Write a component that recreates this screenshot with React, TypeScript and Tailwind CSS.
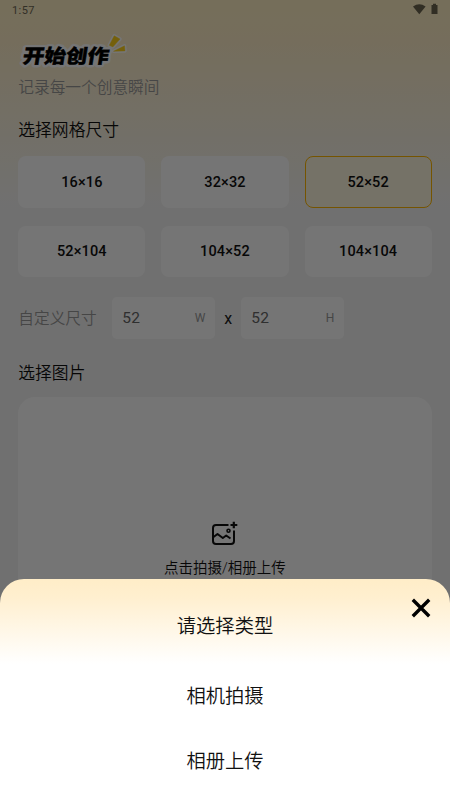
const SIZES = ['16×16', '32×32', '52×52', '52×104', '104×52', '104×104'];

function StatusBar() {
  return (
    <div className="flex h-5 items-center justify-between pl-3 pr-[11px] text-[#6e6854] text-[11px] leading-5 tracking-[0.4px]">
      <span className="relative top-px">1:57</span>
      <svg className="h-5 w-[26px]" viewBox="0 0 26 20" fill="#6b6450">
        <path d="M0 6.5Q6.3 1.8 12.6 6.5L6.3 14.2Z" />
        <path d="M18.5 5h1.5V3.7h3V5h1.5v9h-6z" />
      </svg>
    </div>
  );
}

function Rays() {
  return (
    <>
      <path d="M91.3 11.3L96.2 1.8L102 5L94.9 12.9Z" />
      <path d="M95.5 17.3L106.5 11.8L107 16.9Z" />
    </>
  );
}

function Logo() {
  return (
    <svg className="block h-[36px] w-[112px] overflow-visible" viewBox="0 0 112 36">
      <g stroke="#fff" strokeWidth="3.5" strokeLinejoin="round" fill="#fff">
        <Rays />
      </g>
      <text
        transform="translate(4 29.2) skewX(-9) scale(1 0.9)"
        fontSize="21.4"
        fontWeight="900"
        textLength="86"
        fill="#fff"
        stroke="#fff"
        strokeWidth="6"
        strokeLinejoin="round"
      >
        开始创作
      </text>
      <text
        transform="translate(4 29.2) skewX(-9) scale(1 0.9)"
        fontSize="21.4"
        fontWeight="900"
        textLength="86"
        fill="#000"
        stroke="#000"
        strokeWidth="0.5"
      >
        开始创作
      </text>
      <g fill="#ffd21a" stroke="#ffd21a" strokeWidth="0.4">
        <Rays />
      </g>
    </svg>
  );
}

function SizeField({ unit }: { unit: string }) {
  return (
    <div className="flex h-[42px] w-[103px] items-center justify-between rounded-[5px] bg-white px-[10px]">
      <span className="pt-[2px] text-[15.5px] tracking-[0.2px] text-[#666]">52</span>
      <span className="text-xs text-[#999]">{unit}</span>
    </div>
  );
}

function AddImageIcon() {
  return (
    <svg className="h-7 w-7" viewBox="0 0 28 28" fill="none" stroke="#111" strokeWidth="2">
      <path d="M17.5 5H5A3 3 0 0 0 2 8V21A3 3 0 0 0 5 24H20A3 3 0 0 0 23 21V10.5" />
      <path d="M2.5 17L6.5 14L11.8 18L15.2 15.5L19.5 18.5" strokeLinejoin="round" />
      <circle cx="17.5" cy="10.7" r="1.5" strokeWidth="1.6" />
      <path d="M22.8 1.7V8.3M19.5 5H26.3" strokeWidth="2.2" />
    </svg>
  );
}

export default function App() {
  return (
    <div className="relative h-[800px] w-[450px] overflow-hidden bg-[#f5f5f5] font-[Roboto,'Noto_Sans_CJK_SC',sans-serif]">
      <div className="h-full bg-[linear-gradient(180deg,#fff0c4_0px,#feeec8_40px,#f5f5f5_210px)]">
        <StatusBar />
        <main className="flex flex-col px-[18.3px] pt-[14px]">
          <Logo />
          <p className="mt-[7px] text-[15.7px] font-[350] leading-[22px] text-[#999]">记录每一个创意瞬间</p>
          <h2 className="mt-[18px] text-[16.8px] font-[350] leading-[26px] text-[#111]">选择网格尺寸</h2>
          <div className="mt-[13px] grid grid-cols-3 gap-x-[16px] gap-y-[18px]">
            {SIZES.map((size) => (
              <div
                key={size}
                className={`flex h-[51.5px] items-center justify-center rounded-lg pt-[2px] text-[14.5px] font-medium tracking-[0.15px] text-[#111] ${
                  size === '52×52' ? 'border border-[#ffb800] bg-[#fff8e1]' : 'bg-white'
                }`}
              >
                {size}
              </div>
            ))}
          </div>
          <div className="mt-[20px] flex items-center">
            <span className="relative top-px w-[94px] text-[15.7px] font-[350] text-[#999]">自定义尺寸</span>
            <SizeField unit="W" />
            <span className="w-[26px] pt-px text-center text-base text-[#222]">x</span>
            <SizeField unit="H" />
          </div>
          <h2 className="mt-[21px] text-[16.8px] font-[350] leading-[26px] text-[#111]">选择图片</h2>
          <div className="mt-[11px] flex h-[310px] flex-col items-center rounded-[17px] bg-white pt-[123px]">
            <AddImageIcon />
            <span className="mt-[10px] text-[14.5px] font-[350] leading-[22px] text-[#111]">点击拍摄/相册上传</span>
          </div>
        </main>
      </div>

      <div className="absolute inset-0 flex flex-col justify-end bg-black/54">
        <section className="relative flex h-[221px] flex-col items-center rounded-t-[24px] bg-white bg-[linear-gradient(180deg,#ffedc8_0px,#ffefcf_18px,#fff_85px)] text-[19.3px] font-[350] leading-7 text-[#111]">
          <h3 className="mt-[34px]">请选择类型</h3>
          <button className="mt-[42px]">相机拍摄</button>
          <button className="mt-[37px]">相册上传</button>
          <button className="absolute right-[19px] top-[19px] h-5 w-5" aria-label="关闭">
            <svg viewBox="0 0 20 20" fill="none" stroke="#000" strokeWidth="3.4">
              <path d="M1.8 1.8L18.2 18.2M18.2 1.8L1.8 18.2" />
            </svg>
          </button>
        </section>
      </div>
    </div>
  );
}
